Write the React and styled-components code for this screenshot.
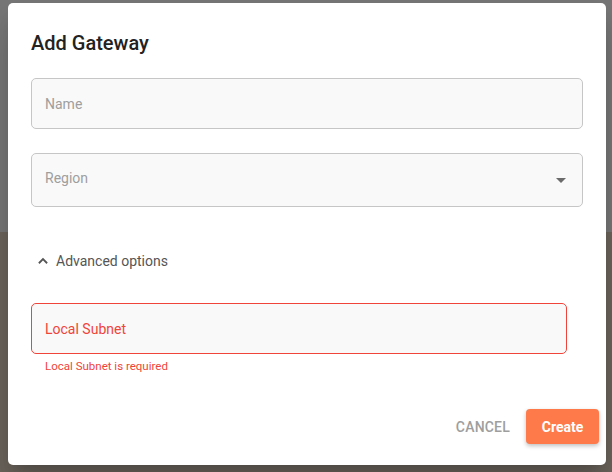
import React from 'react'
import styled, { createGlobalStyle } from 'styled-components'

const Global = createGlobalStyle`
  html, body { margin: 0; padding: 0; }
  body { font-family: Roboto, 'Liberation Sans', sans-serif; }
`

const Backdrop = styled.div`
  width: 612px;
  height: 472px;
  box-sizing: border-box;
  padding: 3px 6px 7px 8px;
  background: linear-gradient(to bottom, #767676 0, #767676 232px, #6b645c 232px, #6b645c 100%);
  display: flex;
`

const Dialog = styled.div`
  flex: 1;
  background: #fff;
  border-radius: 5px;
  box-shadow: 0 11px 15px -7px rgba(0,0,0,.2), 0 24px 38px 3px rgba(0,0,0,.14);
  padding: 28px 23px 0 23px;
  display: flex;
  flex-direction: column;
  box-sizing: border-box;
`

const Title = styled.h2`
  margin: 0;
  font-size: 20px;
  line-height: 24px;
  font-weight: 500;
  color: #222;
`

const Field = styled.div`
  box-sizing: border-box;
  height: ${p => p.$h || 51}px;
  margin-top: ${p => p.$top}px;
  margin-right: ${p => p.$right || 0}px;
  background: #f9f9f9;
  border: 1px solid ${p => (p.$error ? '#f0443a' : '#c6c6c6')};
  border-radius: 5px;
  display: flex;
  align-items: center;
  padding: 0 13px ${p => p.$lift || 0}px;
  font-size: 14px;
  color: ${p => (p.$error ? '#f0443a' : '#9e9e9e')};
`

const Label = styled.span`
  flex: 1;
`

const Caret = styled.span`
  width: 0;
  height: 0;
  border-left: 5px solid transparent;
  border-right: 5px solid transparent;
  border-top: 5px solid #6b6b6b;
  margin-right: 3px;
  margin-top: 4px;
`

const Toggle = styled.div`
  margin-top: 45px;
  display: flex;
  align-items: center;
  gap: 4px;
  padding-left: 3px;
  font-size: 14px;
  color: #555;
`

const ErrorText = styled.div`
  margin-top: 5px;
  padding-left: 14px;
  font-size: 11.5px;
  color: #f0443a;
`

const Actions = styled.div`
  margin-top: auto;
  margin-right: -16px;
  margin-bottom: 21px;
  display: flex;
  justify-content: flex-end;
  align-items: center;
  gap: 16px;
`

const TextButton = styled.button`
  border: none;
  background: none;
  font-family: inherit;
  font-size: 14px;
  font-weight: 500;
  color: #9e9e9e;
  padding: 0;
  letter-spacing: 0.2px;
`

const PrimaryButton = styled.button`
  border: none;
  background: #ff7a4b;
  color: #fff;
  font-family: inherit;
  font-size: 14px;
  font-weight: 700;
  width: 73px;
  height: 35px;
  border-radius: 4px;
  box-shadow: 0 2px 4px rgba(0,0,0,.25);
`

export default function App() {
  return (
    <Backdrop>
      <Global />
      <Dialog>
        <Title>Add Gateway</Title>
        <Field $top={23} $h={51}>
          <Label>Name</Label>
        </Field>
        <Field $top={24} $h={54} $lift={4}>
          <Label>Region</Label>
          <Caret />
        </Field>
        <Toggle>
          <svg width="18" height="18" viewBox="0 0 24 24" fill="none" stroke="#555" strokeWidth="2.4">
            <path d="M6.5 15l5.5-5.5 5.5 5.5" />
          </svg>
          Advanced options
        </Toggle>
        <Field $top={33} $h={51} $right={16} $error>
          <Label>Local Subnet</Label>
        </Field>
        <ErrorText>Local Subnet is required</ErrorText>
        <Actions>
          <TextButton>CANCEL</TextButton>
          <PrimaryButton>Create</PrimaryButton>
        </Actions>
      </Dialog>
    </Backdrop>
  )
}
